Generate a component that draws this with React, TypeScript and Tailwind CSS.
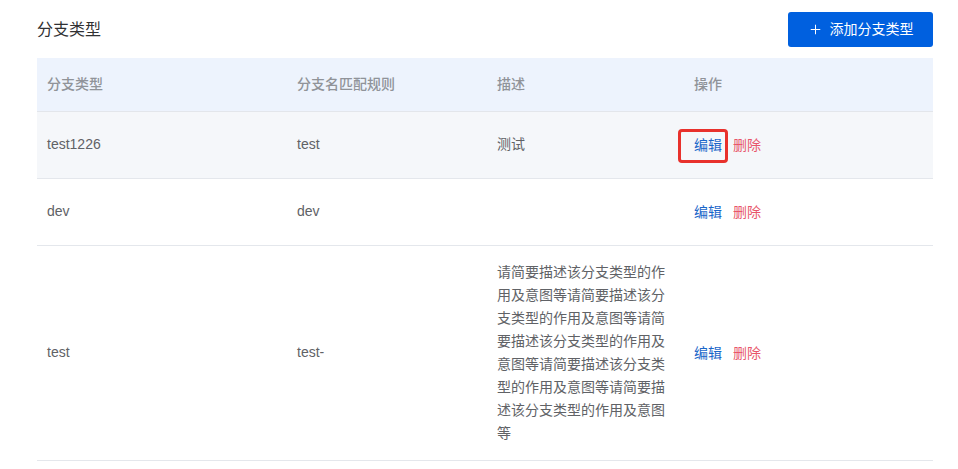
import { Plus } from 'lucide-react'

interface BranchType {
  name: string
  rule: string
  desc: string
  active?: boolean
  marked?: boolean
}

const rows: BranchType[] = [
  { name: 'test1226', rule: 'test', desc: '测试', active: true, marked: true },
  { name: 'dev', rule: 'dev', desc: '' },
  {
    name: 'test',
    rule: 'test-',
    desc: '请简要描述该分支类型的作用及意图等请简要描述该分支类型的作用及意图等请简要描述该分支类型的作用及意图等请简要描述该分支类型的作用及意图等请简要描述该分支类型的作用及意图等',
  },
]

const font = { fontFamily: '"Liberation Sans", "Noto Sans CJK SC", sans-serif' }

export default function App() {
  return (
    <div className="min-h-screen bg-white text-[14px]" style={font}>
      <div className="pl-[37px] pr-[25px] pt-3">
        {/* Header */}
        <div className="flex items-center justify-between h-[35px] mb-[11px]">
          <h1 className="text-[16px] text-[#303133] leading-none">分支类型</h1>
          <button className="flex items-center gap-[7px] h-[35px] w-[145px] justify-center rounded-[3px] bg-[#0060df] text-white text-[14px]">
            <Plus className="h-[15px] w-[15px]" strokeWidth={1.6} />
            <span>添加分支类型</span>
          </button>
        </div>

        {/* Table */}
        <table className="w-full border-collapse table-fixed">
          <colgroup>
            <col className="w-[250px]" />
            <col className="w-[200px]" />
            <col className="w-[197px]" />
            <col />
          </colgroup>
          <thead>
            <tr className="bg-[#edf3fd] border-b border-[#e3e6eb] h-[53px]">
              <th className="px-[10px] text-left font-medium text-[#909399] text-[14px]">分支类型</th>
              <th className="px-[10px] text-left font-medium text-[#909399] text-[14px]">分支名匹配规则</th>
              <th className="px-[10px] text-left font-medium text-[#909399] text-[14px]">描述</th>
              <th className="px-[10px] text-left font-medium text-[#909399] text-[14px]">操作</th>
            </tr>
          </thead>
          <tbody>
            {rows.map((row) => (
              <tr
                key={row.name}
                className={`border-b border-[#e4e7ec] h-[67px] ${row.active ? 'bg-[#f5f7fa]' : 'bg-white'}`}
              >
                <td className="px-[10px] py-[15px] text-[#606266]">{row.name}</td>
                <td className="px-[10px] py-[15px] text-[#606266]">{row.rule}</td>
                <td className="px-[10px] py-[15px] text-[#606266] leading-[23px] break-all">{row.desc}</td>
                <td className="px-[10px] py-[15px]">
                  <div className="relative flex items-center gap-[11px] leading-[20px]">
                    <span className="text-[#1a66c9]">编辑</span>
                    <span className="text-[#e8566b]">删除</span>
                    {row.marked && (
                      <span className="absolute left-[-16px] top-[-6px] w-[50px] h-[34px] border-[3px] border-[#e8312c] rounded-[4px]" />
                    )}
                  </div>
                </td>
              </tr>
            ))}
          </tbody>
        </table>
      </div>
    </div>
  )
}
